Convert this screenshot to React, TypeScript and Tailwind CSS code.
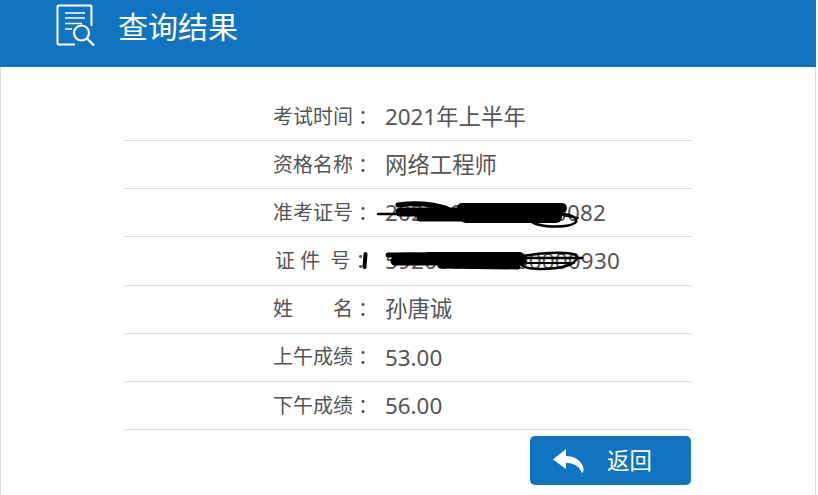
const FONT = "font-['Noto_Sans','Noto_Sans_CJK_SC',sans-serif]";

const rows = [
  { label: '考试时间', value: '2021年上半年' },
  { label: '资格名称', value: '网络工程师' },
  { label: '准考证号', value: '20210000000000082', mask: true },
  { label: '证 件  号', value: '592000000000000930', wide: true },
  { label: '姓\u3000\u3000名', value: '孙唐诚' },
  { label: '上午成绩', value: '53.00' },
  { label: '下午成绩', value: '56.00' },
];

function ResultIcon() {
  return (
    <svg width="40" height="44" viewBox="0 0 40 44" fill="none" stroke="white" strokeWidth="2" aria-hidden="true">
      <path d="M19 40.500H2.500a1 1 0 0 1-1-1V2.500a1 1 0 0 1 1-1h32a1 1 0 0 1 1 1V22" strokeWidth="2" />
      <path d="M9 9h20M9 14h20M9 19.500h17M9 25h7" strokeWidth="1.700" />
      <circle cx="25.500" cy="29" r="7.500" strokeWidth="2.200" />
      <path d="M31 34.500l7 7" strokeWidth="2.400" />
    </svg>
  );
}

function ReplyIcon() {
  return (
    <svg width="31" height="24" viewBox="0 0 31 24" fill="white" aria-hidden="true">
      <path d="M13 0 0 10.500 13 20v-6c7 0 13 2.500 16 10 2-1 2-4 .5-7.500C26.500 10 20 7 13 7z" />
    </svg>
  );
}

// the black marker scribbles over the two ID numbers
function Scribbles() {
  return (
    <svg className="absolute inset-0 pointer-events-none" width="818" height="495" viewBox="0 0 818 495" fill="none" stroke="black" strokeLinecap="round" aria-hidden="true">
      <path d="M378 214H425" strokeWidth="2.500" />
      <path d="M398 205C420 202 436 205 448 209" strokeWidth="5" />
      <path d="M400 212H470" strokeWidth="9" />
      <path d="M420 218H480" strokeWidth="7" />
      <path d="M462 208H562" strokeWidth="10" />
      <path d="M466 217H556" strokeWidth="12" />
      <path d="M530 219C532 228 570 229 576 222C578 214 560 212 530 213" strokeWidth="2.500" />
      <path d="M545 212 578 218" strokeWidth="2" />
      <path d="M365.500 254 364.500 267" strokeWidth="4" />
      <path d="M388 255C420 254 450 255 500 256" strokeWidth="5" />
      <path d="M395 261H522" strokeWidth="9" />
      <path d="M428 255H520" strokeWidth="6" />
      <path d="M440 266 518 267" strokeWidth="5" />
      <path d="M500 258H582" strokeWidth="2.500" />
      <path d="M520 257C535 253 565 251 576 255C580 263 565 269 540 269C528 269 522 267 520 263" strokeWidth="2.500" />
      <path d="M522 263H574" strokeWidth="2" />
    </svg>
  );
}

export default function App() {
  return (
    <div className={`relative h-[495px] w-[818px] overflow-hidden bg-white ${FONT}`}>
      <div className="h-[495px] w-[816px] border-x border-[#d9d9d9]">
        <header className="-ml-px flex h-[67px] w-[816px] items-start bg-[#1174c2] pl-[56px] pt-[4px]">
          <ResultIcon />
          <h1 className="ml-[22px] mt-[2px] text-[30px] leading-[42px] text-white">查询结果</h1>
        </header>

        <div className="mx-auto mt-[26px] w-[566px]">
          {rows.map((row) => (
            <div key={row.label} className="flex h-[48.170px] items-center border-b border-[#dddddd] pl-[148px] text-[#555555]">
              <span className={`w-[112px] whitespace-pre text-[20px] ${row.wide ? 'pl-[2px]' : ''}`}>
                {row.label}
                <span className="ml-[5px]">：</span>
              </span>
              <span className={`text-[22.400px] ${row.mask ? 'tracking-[0.2px]' : ''} ${row.wide ? 'tracking-[0.250px]' : ''}`}>
                {row.value}
              </span>
            </div>
          ))}
          <div className="mt-[6px] flex justify-end">
            <button className="flex h-[49px] w-[161px] items-center rounded-[5px] bg-[#1174c2] pl-[23px] text-[22.400px] text-white">
              <ReplyIcon />
              <span className="ml-[23px]">返回</span>
            </button>
          </div>
        </div>
      </div>
      <Scribbles />
    </div>
  );
}
